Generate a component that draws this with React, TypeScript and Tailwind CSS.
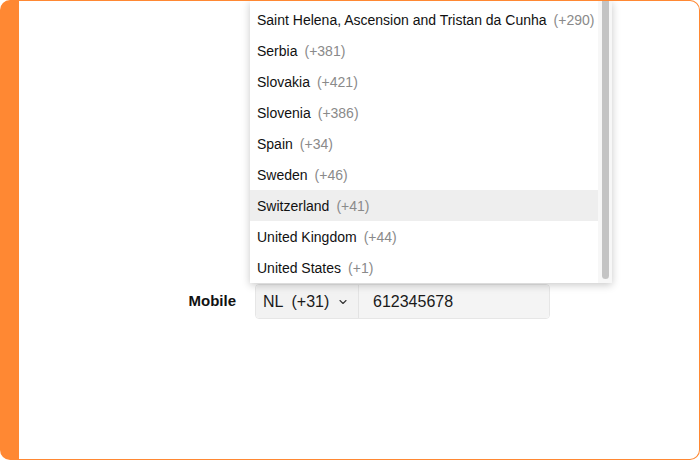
import { ChevronDown } from 'lucide-react'

const COUNTRIES = [
  { name: 'Saint Helena, Ascension and Tristan da Cunha', code: '+290' },
  { name: 'Serbia', code: '+381' },
  { name: 'Slovakia', code: '+421' },
  { name: 'Slovenia', code: '+386' },
  { name: 'Spain', code: '+34' },
  { name: 'Sweden', code: '+46' },
  { name: 'Switzerland', code: '+41' },
  { name: 'United Kingdom', code: '+44' },
  { name: 'United States', code: '+1' },
]

export default function App() {
  return (
    <div className="w-[700px] h-[460px] bg-white" style={{ fontFamily: '"Liberation Sans", Arial, sans-serif' }}>
      <div className="relative w-full h-full bg-white border border-[#ff8833] border-l-[19px] rounded-[10px] overflow-hidden">
        {/* Mobile row */}
        <div className="pt-[283px] pl-[137px] flex items-center gap-[19px]">
          <label className="w-[80px] text-right text-[15px] font-bold text-[#111]">Mobile</label>
          <div className="flex h-[35px] rounded-[4px] border border-[#e6e6e6]">
            <button className="w-[103px] flex items-center pl-[7px] bg-[#f2f2f2] border-r border-[#e3e3e3] rounded-l-[4px] text-base text-[#1a1a1a]">
              <span>NL</span>
              <span className="ml-[8px]">(+31)</span>
              <ChevronDown size={12} strokeWidth={2.25} className="ml-[8px] text-[#333]" />
            </button>
            <input
              className="w-[190px] pl-[14px] bg-[#f4f4f4] rounded-r-[4px] text-base text-[#1a1a1a] outline-none"
              defaultValue="612345678"
            />
          </div>
        </div>

        {/* Country dropdown */}
        <div className="absolute left-[231px] top-0 w-[362px] h-[282px] bg-white shadow-[0_2px_8px_rgba(0,0,0,0.22)] flex">
          <ul className="flex-1 min-w-0 overflow-hidden pt-[3px]">
            {COUNTRIES.map(c => (
              <li
                key={c.name}
                className={`h-[31px] flex items-center px-[7px] text-sm text-[#111] whitespace-nowrap ${c.name === 'Switzerland' ? 'bg-[#eeeeee]' : ''}`}
              >
                <span>{c.name}</span>
                <span className="ml-[7px] text-[#8a8a8a]">({c.code})</span>
              </li>
            ))}
          </ul>
          <div className="w-[14px] shrink-0 bg-[#f7f7f7] flex justify-center">
            <div className="w-[7px] h-[278px] bg-[#c4c4c4] rounded-b-full" />
          </div>
        </div>
      </div>
    </div>
  )
}
